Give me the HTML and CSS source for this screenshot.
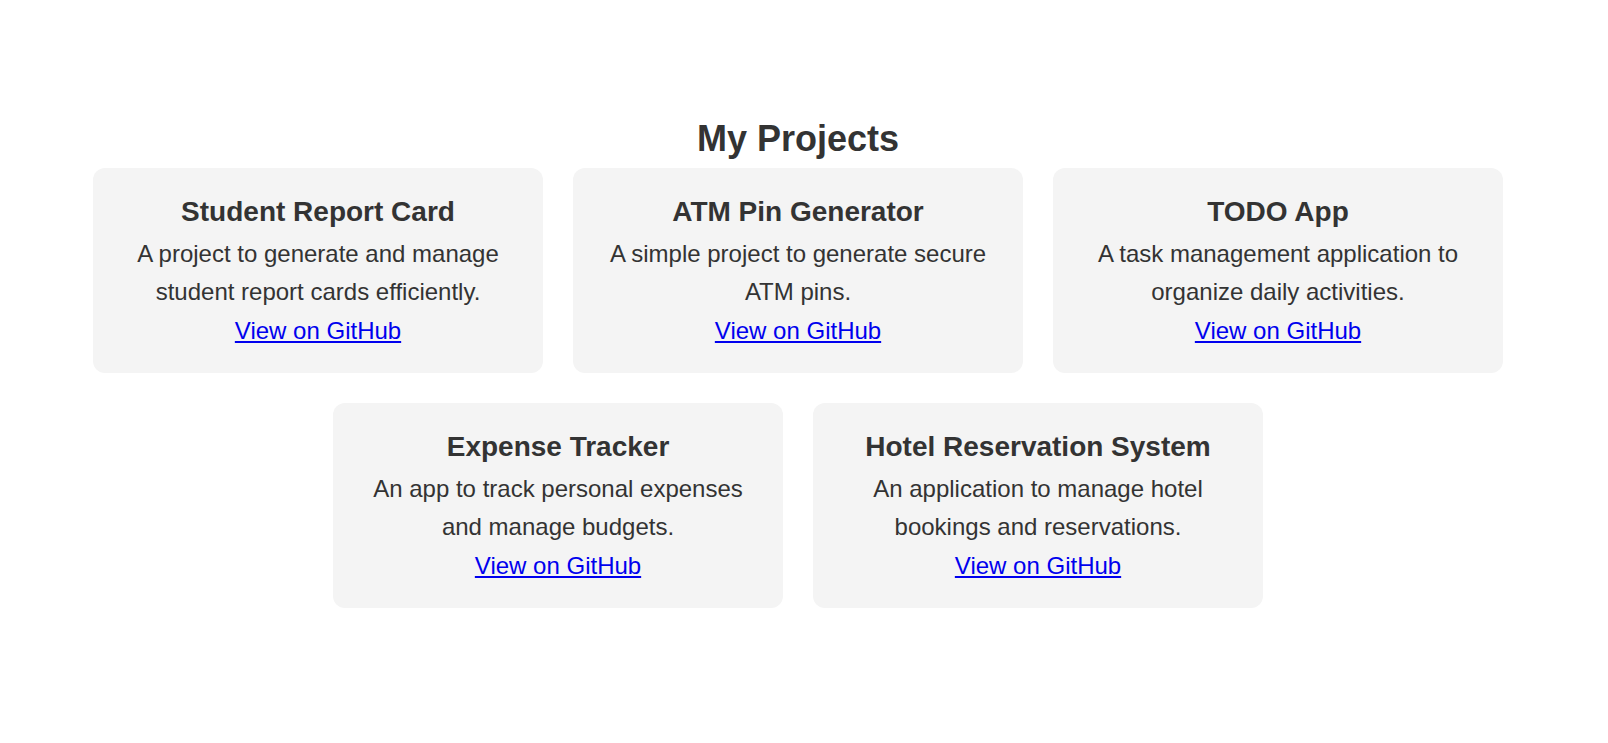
FILE: index.html
```html
<!DOCTYPE html>
<html lang="en">
<head>
<meta charset="utf-8">
<title>My Projects</title>
<link rel="stylesheet" href="styles.css">
</head>
<body>
<main class="page">
  <section class="projects">
    <h2 class="projects-title">My Projects</h2>
    <div class="project-list">
      <div class="project-card">
        <h3 class="project-name">Student Report Card</h3>
        <p class="project-desc">A project to generate and manage student report cards efficiently.</p>
        <a class="project-link" href="#">View on GitHub</a>
      </div>
      <div class="project-card">
        <h3 class="project-name">ATM Pin Generator</h3>
        <p class="project-desc">A simple project to generate secure ATM pins.</p>
        <a class="project-link" href="#">View on GitHub</a>
      </div>
      <div class="project-card">
        <h3 class="project-name">TODO App</h3>
        <p class="project-desc">A task management application to organize daily activities.</p>
        <a class="project-link" href="#">View on GitHub</a>
      </div>
      <div class="project-card">
        <h3 class="project-name">Expense Tracker</h3>
        <p class="project-desc">An app to track personal expenses and manage budgets.</p>
        <a class="project-link" href="#">View on GitHub</a>
      </div>
      <div class="project-card">
        <h3 class="project-name">Hotel Reservation System</h3>
        <p class="project-desc">An application to manage hotel bookings and reservations.</p>
        <a class="project-link" href="#">View on GitHub</a>
      </div>
    </div>
  </section>
</main>
</body>
</html>
```
FILE: styles.css
```css
html, body {
  margin: 0;
  padding: 0;
  background: #ffffff;
}

body {
  font-family: "Liberation Sans", Arial, sans-serif;
  font-size: 24px;
  line-height: 1.6;
  color: #333333;
}

.page {
  padding: 110px 12px 0 0;
}

.projects {
  display: flex;
  flex-direction: column;
  align-items: center;
}

.projects-title {
  margin: 0;
  font-size: 36px;
  font-weight: bold;
  line-height: 1.6;
  text-align: center;
}

.project-list {
  width: 1410px;
  display: flex;
  flex-wrap: wrap;
  justify-content: center;
  gap: 30px;
}

.project-card {
  box-sizing: border-box;
  width: 450px;
  padding: 22.5px;
  background: #f4f4f4;
  border-radius: 12px;
  text-align: center;
}

.project-name {
  margin: 0;
  font-size: 28px;
  font-weight: bold;
  line-height: 1.6;
}

.project-desc {
  margin: 0;
}

.project-link {
  color: #0000ee;
  text-decoration: underline;
}
```
